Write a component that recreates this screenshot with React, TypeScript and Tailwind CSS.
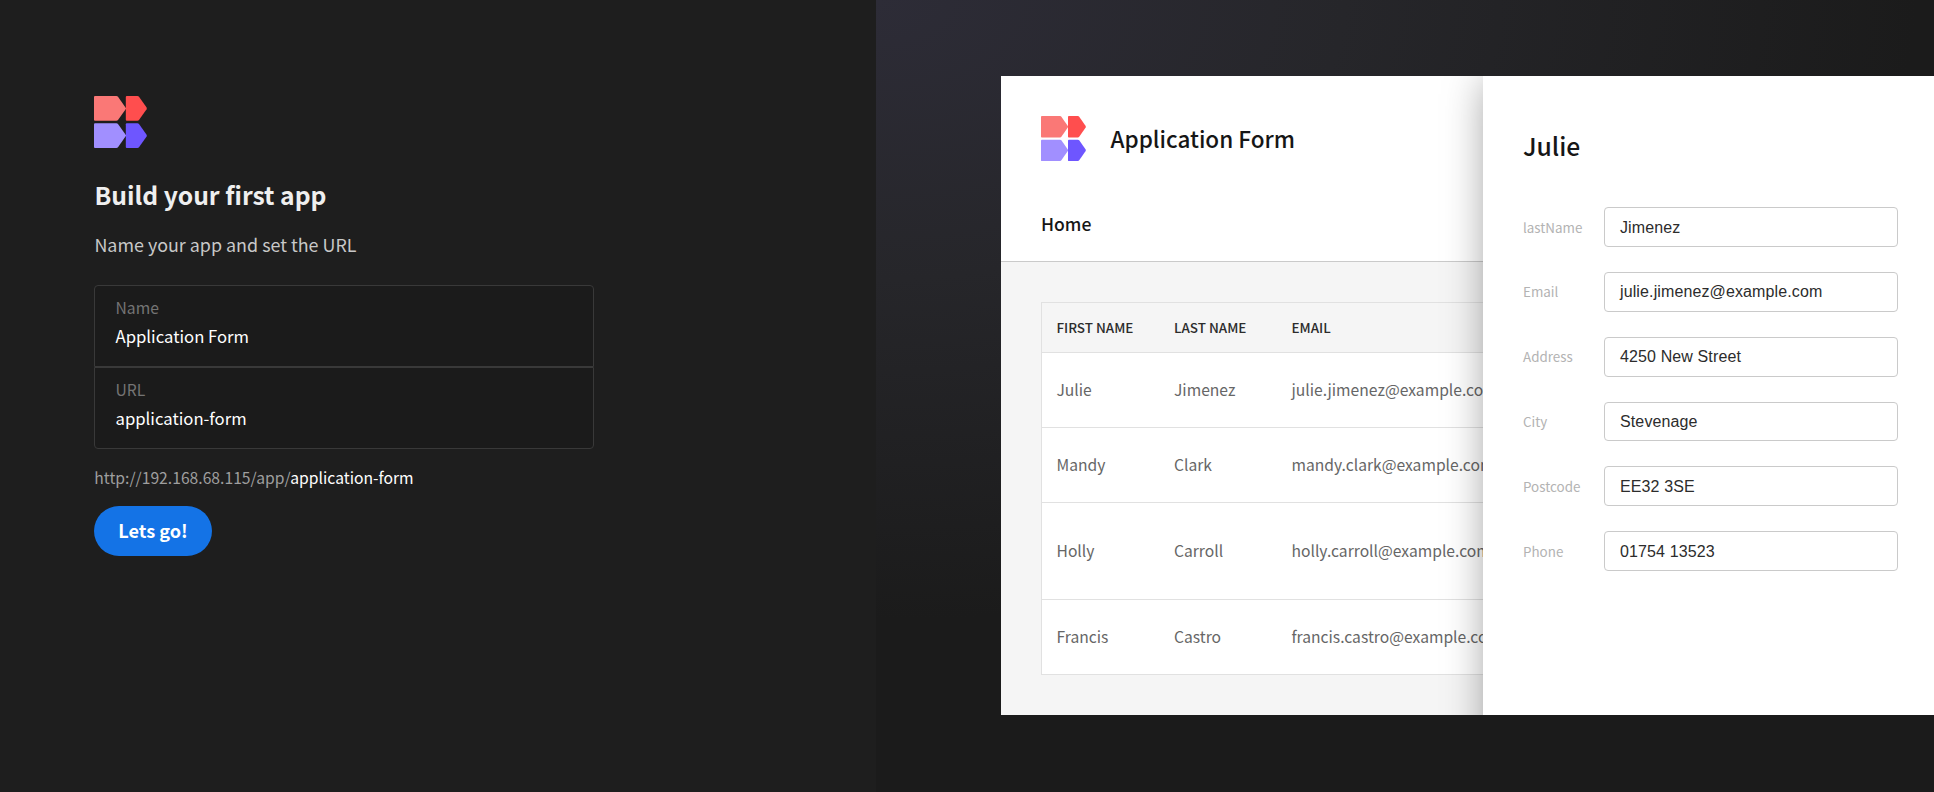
import React from "react";

const SANS = "font-['Noto_Sans_CJK_SC',sans-serif]";

function Logo({ className }: { className: string }) {
  return (
    <svg viewBox="0 0 53 52" preserveAspectRatio="none" className={className} aria-hidden="true">
      <path d="M1 0H22.4Q23.4 0 24 .8L32.2 12.4L24 24Q23.4 24.7 22.4 24.7H1Q0 24.7 0 23.7V1Q0 0 1 0Z" fill="#fa7876" />
      <path d="M32.8 0H43.4Q44.4 0 45 .8L52.6 11.6Q53 12.4 52.6 13.2L45 24Q44.4 24.7 43.4 24.7H32.8Q31.8 24.7 31.8 23.7V1Q31.8 0 32.8 0Z" fill="#ff4e4e" />
      <path d="M1 27.3H22.4Q23.4 27.3 24 28L32.2 39.6L24 51.2Q23.4 52 22.4 52H1Q0 52 0 51V28.3Q0 27.3 1 27.3Z" fill="#a18fff" />
      <path d="M32.8 27.3H43.4Q44.4 27.3 45 28L52.6 38.8Q53 39.6 52.6 40.4L45 51.2Q44.4 52 43.4 52H32.8Q31.8 52 31.8 51V28.3Q31.8 27.3 32.8 27.3Z" fill="#6e56ff" />
    </svg>
  );
}

function Field({ label, value, className }: { label: string; value: string; className: string }) {
  return (
    <div className={`h-[82px] border border-[#393939] bg-[#1b1b1b] px-[20.5px] pt-2.5 ${className}`}>
      <div className="text-[15.7px] leading-6 text-[#747474]">{label}</div>
      <div className="mt-1 text-[16.7px] leading-6 text-white">{value}</div>
    </div>
  );
}

const rows = [
  { first: "Julie", last: "Jimenez", email: "julie.jimenez@example.com", height: "h-[75px]" },
  { first: "Mandy", last: "Clark", email: "mandy.clark@example.com", height: "h-[75px]" },
  { first: "Holly", last: "Carroll", email: "holly.carroll@example.com", height: "h-[97px]" },
  { first: "Francis", last: "Castro", email: "francis.castro@example.com", height: "h-[75px]" },
];

const details = [
  ["lastName", "Jimenez"],
  ["Email", "julie.jimenez@example.com"],
  ["Address", "4250 New Street"],
  ["City", "Stevenage"],
  ["Postcode", "EE32 3SE"],
  ["Phone", "01754 13523"],
];

export default function App() {
  return (
    <div className={`flex h-[792px] w-[1934px] overflow-hidden bg-[#1e1e1e] ${SANS}`}>
      <section className="w-[876px] shrink-0 px-[94px] pt-24">
        <Logo className="h-[52px] w-[53px]" />
        <h1 className="mt-[30px] pl-[0.4px] text-[24.7px] leading-8 font-bold text-[#efefef]">Build your first app</h1>
        <p className="mt-5 pl-[0.4px] text-[17.9px] leading-7 text-[#c8c8c8]">Name your app and set the URL</p>
        <div className="mt-[27px] w-[500px]">
          <Field label="Name" value="Application Form" className="rounded-t" />
          <Field label="URL" value="application-form" className="rounded-b" />
        </div>
        <p className="mt-[17px] pl-[0.3px] text-[15.7px] leading-6 text-[#9e9e9e]">
          http://192.168.68.115/app/<span className="text-white">application-form</span>
        </p>
        <button className="mt-4 h-[50px] w-[118px] rounded-full bg-[#1473e6] pb-0.5 text-[18.1px] leading-6 font-bold text-white">
          Lets go!
        </button>
      </section>

      <section className="flex grow bg-[radial-gradient(ellipse_1040px_620px_at_0_0,#2d2c37,#26262a_45%,#1b1b1b)] pt-[76px] pl-[125px]">
        <div className="flex h-[639px] grow overflow-hidden bg-white">
          <div className="flex w-[482px] shrink-0 flex-col overflow-hidden bg-[#f5f5f5]">
            <header className="h-[186px] shrink-0 border-b border-[#cacaca] bg-white pt-10 pl-10">
              <div className="flex gap-[24.5px]">
                <Logo className="h-[45px] w-[45px]" />
                <h2 className="mt-[5.5px] text-[22.5px] leading-8 font-medium text-[#161616]">Application Form</h2>
              </div>
              <nav className="mt-[49px] text-[17.6px] leading-7 font-medium text-[#161616]">Home</nav>
            </header>
            <div className="mt-10 ml-10 w-[700px] border border-[#e1e1e1] bg-white">
              <div className="grid h-[49px] grid-cols-[117.5px_117.5px_1fr] items-center bg-[#f5f5f5] pl-[14.5px] text-[13.45px] font-medium text-[#2c2c2c]">
                <span>FIRST NAME</span>
                <span>LAST NAME</span>
                <span>EMAIL</span>
              </div>
              {rows.map((r) => (
                <div
                  key={r.first}
                  className={`grid grid-cols-[117.5px_117.5px_1fr] items-center border-t border-[#e1e1e1] pl-[14.5px] text-[15.65px] leading-6 text-[#666] ${r.height}`}
                >
                  <span>{r.first}</span>
                  <span>{r.last}</span>
                  <span>{r.email}</span>
                </div>
              ))}
            </div>
          </div>

          <aside className="relative h-[716px] grow bg-white px-10 pt-[53px] shadow-[0_0_40px_-4px_rgba(0,0,0,0.4)]">
            <h2 className="text-[24.7px] leading-8 font-medium text-[#161616]">Julie</h2>
            <div className="mt-[46.2px] flex flex-col gap-[25px]">
              {details.map(([label, value]) => (
                <div key={label} className="flex h-[39.8px] items-center">
                  <span className="w-[81px] shrink-0 pb-px text-[13.4px] leading-5 text-[#b3b3b3]">{label}</span>
                  <div className="flex h-full w-[294px] shrink-0 items-center rounded border border-[#cacaca] pt-px pl-[15px] font-['Liberation_Sans',Arial,sans-serif] text-[16px] leading-5 tracking-[0.12px] text-[#2c2c2c]">
                    {value}
                  </div>
                </div>
              ))}
            </div>
          </aside>
        </div>
      </section>
    </div>
  );
}
